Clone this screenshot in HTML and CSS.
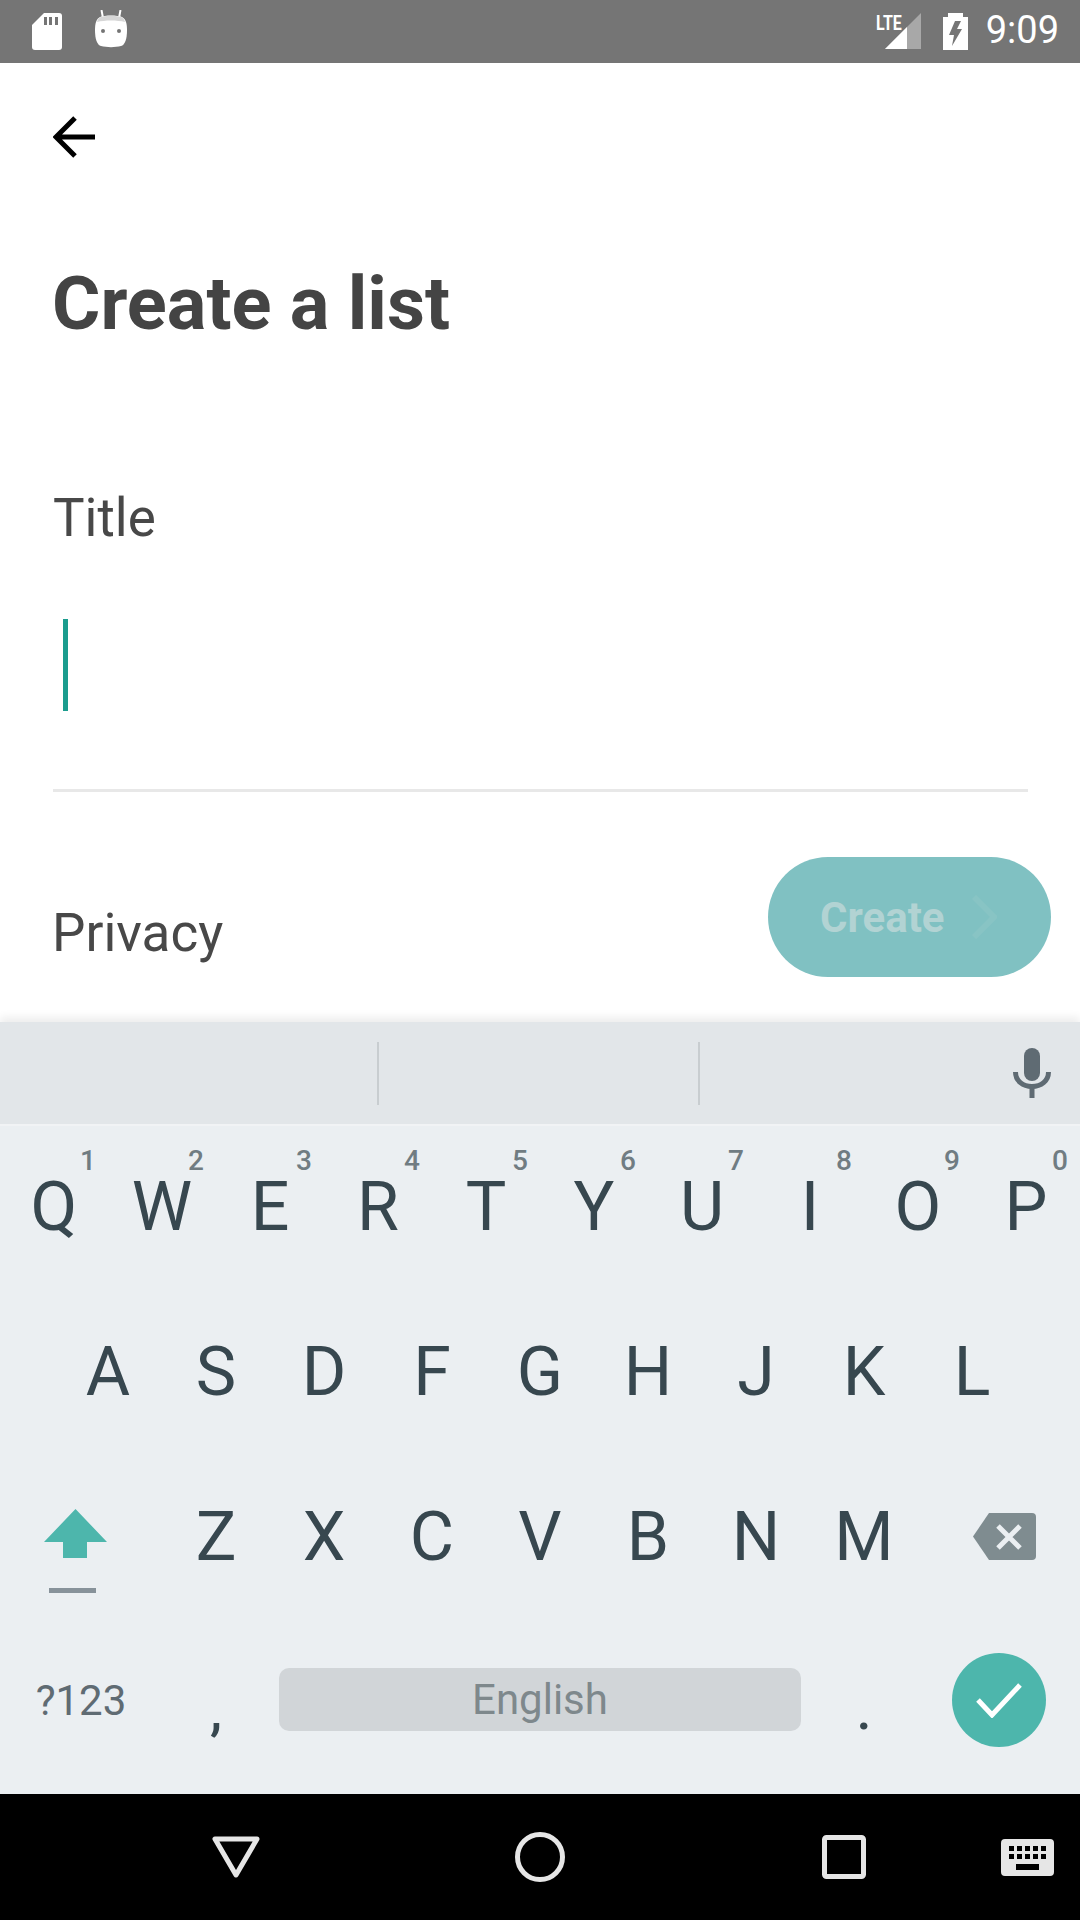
FILE: index.html
```html
<!DOCTYPE html>
<html>
<head>
  <meta charset="utf-8" />
  <title>Create a list</title>
  <link rel="stylesheet" href="styles.css">
</head>
<body>
  <div class="status">
    <div class="status-left">
      <svg width="30" height="37" viewBox="0 0 30 37"><path fill="#fff" d="M12 0H27a3 3 0 0 1 3 3V34a3 3 0 0 1-3 3H3a3 3 0 0 1-3-3V12Z"/><path fill="#757575" d="M12 4h3v8h-3zM17 4h3v8h-3zM23 4h3v8h-3z"/></svg>
      <svg class="bot" width="32" height="38" viewBox="0 0 32 38"><path fill="none" stroke="#fff" stroke-width="2" d="M8 8 6.500 0M24 8 25.500 0"/><path fill="#fff" d="M5 7C10 5 22 5 27 7 31 9 32 14 32 20 32 29 30 35 26 36 20 37.500 12 37.500 6 36 2 35 0 29 0 20 0 14 1 9 5 7Z"/><path fill="#d6d6d6" d="M2 12C3 8 5 7 8 6.500 13 5.500 19 5.500 24 6.500 27 7 29 8 30 12 22 10 10 10 2 12Z"/><circle cx="8" cy="21" r="2" fill="#757575"/><circle cx="24" cy="21" r="2" fill="#757575"/></svg>
    </div>
    <div class="status-right">
      <div class="signal">
        <span class="lte">LTE</span>
        <svg width="36" height="36" viewBox="0 0 36 36"><path fill="#a8a8a8" d="M36 0V36H0Z"/><path fill="#fff" d="M22 14V36H0Z"/></svg>
      </div>
      <svg width="25" height="37" viewBox="0 0 25 37"><path fill="#fff" fill-rule="evenodd" d="M5 0H20V4H25V37H0V4H5ZM12 8 6 22H11L9 33 19 16H14L18 8Z"/></svg>
      <span class="time">9:09</span>
    </div>
  </div>

  <main class="page">
    <svg class="back" width="44" height="42" viewBox="0 0 44 42"><path fill="none" stroke="#000" stroke-width="5" d="M42 21H4M22 2 3 21 22 40"/></svg>
    <h1 class="heading">Create a list</h1>
    <div class="field-label">Title</div>
    <div class="field">
      <div class="cursor"></div>
    </div>
    <div class="privacy-row">
      <span class="privacy">Privacy</span>
      <div class="create">
        <span>Create</span>
        <svg width="26" height="44" viewBox="0 0 26 44"><path fill="none" stroke="#88c4c4" stroke-width="6" d="M3 2 23 22 3 42"/></svg>
      </div>
    </div>
  </main>

  <div class="keyboard">
    <div class="suggestions">
      <div class="slot"></div>
      <div class="slot"></div>
      <div class="slot mic-slot">
        <svg width="38" height="50" viewBox="0 0 38 50"><rect x="11" y="0" width="16" height="33" rx="8" fill="#5f6b73"/><path fill="none" stroke="#5f6b73" stroke-width="5" d="M2.500 24C2.500 33 10 38.500 19 38.500S35.500 33 35.500 24"/><rect x="16.500" y="38" width="5" height="12" fill="#5f6b73"/></svg>
      </div>
    </div>

    <div class="row first">
      <div class="key">Q<sup>1</sup></div>
      <div class="key">W<sup>2</sup></div>
      <div class="key">E<sup>3</sup></div>
      <div class="key">R<sup>4</sup></div>
      <div class="key">T<sup>5</sup></div>
      <div class="key">Y<sup>6</sup></div>
      <div class="key">U<sup>7</sup></div>
      <div class="key">I<sup>8</sup></div>
      <div class="key">O<sup>9</sup></div>
      <div class="key">P<sup>0</sup></div>
    </div>
    <div class="row indent">
      <div class="key">A</div>
      <div class="key">S</div>
      <div class="key">D</div>
      <div class="key">F</div>
      <div class="key">G</div>
      <div class="key">H</div>
      <div class="key">J</div>
      <div class="key">K</div>
      <div class="key">L</div>
    </div>
    <div class="row">
      <div class="key wide shift">
        <svg width="63" height="49" viewBox="0 0 63 49"><path fill="#4db6ac" d="M31.500 0 63 33H43V49H19V33H0Z"/></svg>
        <div class="shift-bar"></div>
      </div>
      <div class="key">Z</div>
      <div class="key">X</div>
      <div class="key">C</div>
      <div class="key">V</div>
      <div class="key">B</div>
      <div class="key">N</div>
      <div class="key">M</div>
      <div class="key wide">
        <svg class="del" width="63" height="47" viewBox="0 0 63 47"><path fill="#7f8c90" d="M16 0H59a4 4 0 0 1 4 4V43a4 4 0 0 1-4 4H16L0 23.500Z"/><path fill="none" stroke="#ebeff2" stroke-width="5" d="M25 13 47 35M47 13 25 35"/></svg>
      </div>
    </div>
    <div class="row last">
      <div class="key wide symbols">?123</div>
      <div class="key punct">,</div>
      <div class="space-key"><div class="space-bar">English</div></div>
      <div class="key punct">.</div>
      <div class="key wide">
        <div class="enter">
          <svg width="46" height="36" viewBox="0 0 46 36"><path fill="none" stroke="#fff" stroke-width="5" d="M2 18 16 33 44 3"/></svg>
        </div>
      </div>
    </div>
  </div>

  <div class="nav">
    <svg class="nav-back" width="48" height="42" viewBox="0 0 48 42"><path fill="none" stroke="#e6e6e6" stroke-width="5" stroke-linejoin="round" d="M3 3H45L24 39Z"/></svg>
    <svg class="nav-home" width="50" height="50" viewBox="0 0 50 50"><circle cx="25" cy="25" r="22.500" fill="none" stroke="#e6e6e6" stroke-width="5"/></svg>
    <svg class="nav-recent" width="44" height="44" viewBox="0 0 44 44"><rect x="2.500" y="2.500" width="39" height="39" rx="2" fill="none" stroke="#e6e6e6" stroke-width="5"/></svg>
    <svg class="nav-kbd" width="53" height="37" viewBox="0 0 53 37"><path fill="#e6e6e6" fill-rule="evenodd" d="M4 0H49a4 4 0 0 1 4 4V33a4 4 0 0 1-4 4H4a4 4 0 0 1-4-4V4A4 4 0 0 1 4 0ZM8 7V12H13V7ZM16 7V12H21V7ZM24 7V12H29V7ZM32 7V12H37V7ZM40 7V12H45V7ZM8 15V20H13V15ZM16 15V20H21V15ZM24 15V20H29V15ZM32 15V20H37V15ZM40 15V20H45V15ZM15 25V31H38V25Z"/></svg>
  </div>
</body>
</html>
```

FILE: styles.css
```css
* {
  box-sizing: border-box;
}
body {
  margin: 0;
  width: 1080px;
  height: 1920px;
  overflow: hidden;
  background: #fff;
  font-family: Roboto, sans-serif;
  display: flex;
  flex-direction: column;
}
svg {
  display: block;
  flex: none;
}

/* status bar */
.status {
  height: 63px;
  background: #757575;
  display: flex;
  justify-content: space-between;
  padding: 0 21px 0 32px;
  align-items: flex-start;
  flex: none;
}
.status-left {
  display: flex;
  gap: 33px;
  padding-top: 13px;
}
.bot {
  margin-top: -3px;
}
.status-right {
  display: flex;
  padding-top: 13px;
}
.signal {
  position: relative;
  width: 36px;
  margin-right: 22px;
}
.lte {
  position: absolute;
  left: -9px;
  top: -2px;
  font-size: 20px;
  font-weight: 700;
  color: #fff;
  transform: scaleX(0.8);
  transform-origin: left top;
}
.time {
  margin-left: 18px;
  margin-top: -1px;
  font-size: 38px;
  line-height: 37px;
  color: #fff;
}

/* form */
.page {
  flex: none;
  height: 959px;
  padding: 53px 0 0 53px;
}
.heading {
  margin: 104px 0 0 -1px;
  font-size: 74px;
  line-height: 84px;
  font-weight: 700;
  color: #444;
}
.field-label {
  margin-top: 142px;
  font-size: 53px;
  line-height: 60px;
  color: #484848;
}
.field {
  width: 975px;
  height: 244px;
  padding: 71px 0 0 10px;
  border-bottom: 3px solid #e8e8e8;
}
.cursor {
  width: 5px;
  height: 92px;
  background: #1b9c8e;
}
.privacy-row {
  display: flex;
  justify-content: space-between;
  align-items: flex-start;
  padding-right: 29px;
  margin-top: 65px;
}
.privacy {
  margin: 46px 0 0 -1px;
  font-size: 53px;
  line-height: 60px;
  color: #484848;
}
.create {
  width: 283px;
  height: 120px;
  border-radius: 60px;
  background: #80c1c2;
  display: flex;
  align-items: center;
  padding-left: 52px;
  gap: 26px;
  font-size: 42px;
  font-weight: 700;
  color: #b2d3d3;
}

/* keyboard */
.keyboard {
  flex: none;
  height: 772px;
  background: #ebeff2;
  box-shadow: 0 -5px 8px rgba(0, 0, 0, 0.07);
}
.suggestions {
  height: 104px;
  background: #e2e6e9;
  border-bottom: 2px solid #f1f3f5;
  display: flex;
  align-items: center;
}
.slot {
  height: 63px;
  width: 379px;
  border-right: 2px solid #c8cdd0;
}
.slot + .slot {
  width: 321px;
}
.mic-slot {
  width: auto;
  flex: 1;
  border: 0;
  display: flex;
  align-items: center;
  justify-content: flex-end;
  padding-right: 29px;
}
.row {
  display: flex;
  height: 165px;
}
.first {
  height: 163px;
  padding-bottom: 2px;
}
.last {
  margin-top: -2px;
}
.indent {
  padding-left: 54px;
}
.key {
  position: relative;
  width: 108px;
  display: flex;
  align-items: center;
  justify-content: center;
  font-size: 68px;
  color: #37474f;
}
.key sup {
  position: absolute;
  top: 19px;
  right: 12px;
  font-size: 28px;
  line-height: 32px;
  font-weight: 500;
  color: #707c82;
}
.wide {
  width: 162px;
}
.shift {
  flex-direction: column;
  justify-content: flex-start;
  padding: 55px 12px 0 0;
}
.shift-bar {
  width: 47px;
  height: 5px;
  margin-top: 30px;
  margin-left: -6px;
  background: #87929a;
}
.del {
  margin-left: 10px;
}
.symbols {
  font-size: 42px;
  color: #5f6b73;
  padding-top: 2px;
}
.punct {
  font-size: 54px;
  font-weight: 500;
  padding-top: 22px;
}
.space-key {
  width: 540px;
  display: flex;
  align-items: center;
  padding: 0 9px;
}
.space-bar {
  width: 100%;
  height: 63px;
  border-radius: 10px;
  background: #d1d5d8;
  display: flex;
  align-items: center;
  justify-content: center;
  font-size: 42px;
  color: #7e888c;
}
.enter {
  width: 94px;
  height: 94px;
  border-radius: 50%;
  background: #4db6ac;
  display: flex;
  align-items: center;
  justify-content: center;
}

/* nav bar */
.nav {
  flex: 1;
  background: #000;
  position: relative;
}
.nav svg {
  position: absolute;
}
.nav-back {
  left: 212px;
  top: 42px;
}
.nav-home {
  left: 515px;
  top: 38px;
}
.nav-recent {
  left: 822px;
  top: 41px;
}
.nav-kbd {
  left: 1001px;
  top: 45px;
}
```
